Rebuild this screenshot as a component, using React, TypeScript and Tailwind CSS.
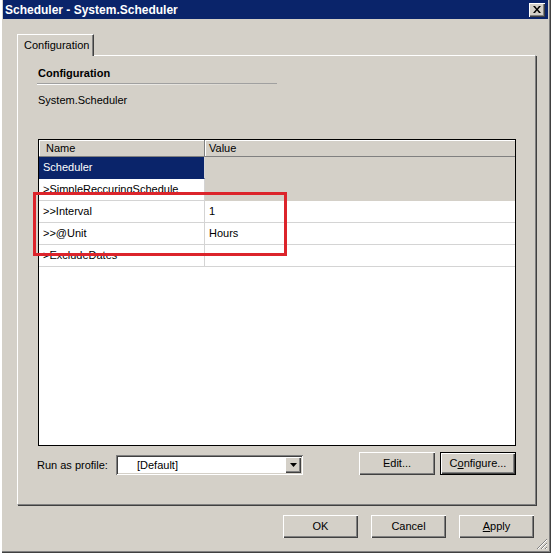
const raised = 'shadow-[inset_1px_1px_0_#ffffff,inset_-1px_-1px_0_#404040,inset_-2px_-2px_0_#808080]'

type Row = {
  name: string
  value: string
  nameCls: string
  valueCls: string
}

const rows: Row[] = [
  { name: 'Scheduler', value: '', nameCls: 'bg-[#0a246a] text-white border-b-[#0a246a]', valueCls: 'bg-[#d4d0c8] border-b-[#d4d0c8]' },
  { name: '>SimpleReccuringSchedule', value: '', nameCls: 'bg-white border-b-[#d4d4d4]', valueCls: 'bg-[#d4d0c8] border-b-[#d4d0c8]' },
  { name: '>>Interval', value: '1', nameCls: 'bg-white border-b-[#d4d4d4]', valueCls: 'bg-white border-b-[#d4d4d4]' },
  { name: '>>@Unit', value: 'Hours', nameCls: 'bg-white border-b-[#d4d4d4]', valueCls: 'bg-white border-b-[#d4d4d4]' },
  { name: '>ExcludeDates', value: '', nameCls: 'bg-white border-b-[#d4d4d4]', valueCls: 'bg-white border-b-[#d4d4d4]' },
]

function Button({ children, isDefault, className }: { children: React.ReactNode; isDefault?: boolean; className: string }) {
  return (
    <div
      className={`flex items-center justify-center bg-[#d4d0c8] text-[11px] text-black ${raised} ${isDefault ? 'border border-black' : ''} ${className}`}
    >
      {children}
    </div>
  )
}

export default function App() {
  return (
    <div className="relative w-[551px] h-[553px] bg-[#d4d0c8] flex flex-col px-[3px] pb-[3px] font-['Liberation_Sans',Arial,sans-serif] text-black shadow-[inset_2px_0_0_#ffffff,inset_-1px_-1px_0_#404040,inset_-2px_-2px_0_#808080]">
      {/* title bar */}
      <div className="h-[19px] bg-[#0a246a] flex items-center justify-between pl-[2px] pr-[3px]">
        <span className="text-white font-bold text-[12px] leading-none">Scheduler - System.Scheduler</span>
        <div className={`w-[16px] h-[14px] bg-[#d4d0c8] flex items-center justify-center ${raised}`}>
          <svg width="8" height="7" viewBox="0 0 8 7">
            <path d="M0 0h2l2 2.5L6 0h2L5 3.5 8 7H6L4 4.5 2 7H0l3-3.5z" fill="#000" />
          </svg>
        </div>
      </div>

      {/* tabs */}
      <div className="flex flex-col pl-[14px] mt-[15px]">
        <div className="relative z-10 w-[77px] h-[22px] -mb-px bg-[#d4d0c8] border-t border-l border-white border-r border-r-[#404040] shadow-[inset_-1px_0_0_#808080] pl-[6px] flex items-center text-[11px]">
          Configuration
        </div>
        <div className="w-[519px] h-[450px] border border-t-white border-l-white border-r-[#808080] border-b-[#808080] shadow-[1px_1px_0_#404040] flex flex-col pl-[20px] pt-[11px]">
          <div className="h-[13px] leading-[13px] text-[11px] font-bold">Configuration</div>
          <div className="mt-[3px] -ml-px w-[240px] h-[2px] border-t border-[#a0a0a0] bg-gradient-to-r from-white to-transparent" />
          <div className="mt-[9px] h-[13px] leading-[13px] text-[11px]">System.Scheduler</div>

          {/* property grid */}
          <div className="mt-[32px] w-[478px] h-[307px] border border-black bg-white flex flex-col text-[11px]">
            <div className="flex h-[17px] bg-[#d4d0c8] border-b border-[#808080]">
              <div className="w-[166px] border-r border-[#808080] shadow-[inset_1px_1px_0_#ffffff] pl-[7px] flex items-center">Name</div>
              <div className="flex-1 shadow-[inset_1px_1px_0_#ffffff] pl-[4px] flex items-center">Value</div>
            </div>
            {rows.map((r) => (
              <div key={r.name} className="flex h-[22px]">
                <div className={`w-[166px] border-b border-r border-r-[#d4d4d4] pl-[4px] flex items-center whitespace-nowrap ${r.nameCls}`}>
                  {r.name}
                </div>
                <div className={`flex-1 border-b pl-[4px] flex items-center ${r.valueCls}`}>{r.value}</div>
              </div>
            ))}
          </div>

          {/* bottom controls */}
          <div className="mt-[6px] -ml-px w-[479px] h-[23px] flex items-end text-[11px]">
            <div className="w-[79px] h-[20px] flex items-center">Run as profile:</div>
            <div className="w-[187px] h-[20px] bg-white flex items-center p-[2px] shadow-[inset_1px_1px_0_#808080,inset_-1px_-1px_0_#ffffff,inset_2px_2px_0_#404040,inset_-2px_-2px_0_#d4d0c8]">
              <span className="flex-1 pl-[19px]">[Default]</span>
              <div className={`w-[16px] h-[16px] bg-[#d4d0c8] flex items-center justify-center ${raised}`}>
                <svg width="7" height="4" viewBox="0 0 7 4">
                  <path d="M0 0h7L3.5 4z" fill="#000" />
                </svg>
              </div>
            </div>
            <div className="flex-1" />
            <div className="flex gap-[5px]">
              <Button className="w-[76px] h-[23px]">Edit...</Button>
              <Button isDefault className="w-[76px] h-[23px]">
                C<span className="underline">o</span>nfigure...
              </Button>
            </div>
          </div>
        </div>
      </div>

      {/* dialog buttons */}
      <div className="mt-[10px] flex justify-end gap-[13px] pr-[14px]">
        <Button className="w-[75px] h-[23px]">OK</Button>
        <Button className="w-[75px] h-[23px]">Cancel</Button>
        <Button className="w-[75px] h-[23px]">
          <span className="underline">A</span>pply
        </Button>
      </div>

      {/* size grip */}
      <svg className="absolute right-[3px] bottom-[3px]" width="12" height="12" viewBox="0 0 12 12">
        <path d="M11 1L1 11M11 5L5 11M11 9L9 11" stroke="#808080" strokeWidth="1" />
        <path d="M11 2L2 11M11 6L6 11M11 10L10 11" stroke="#ffffff" strokeWidth="1" />
      </svg>

      {/* annotation */}
      <div className="absolute left-[33px] top-[192px] w-[254px] h-[64px] border-[3px] border-[#dc242b]" />
    </div>
  )
}
